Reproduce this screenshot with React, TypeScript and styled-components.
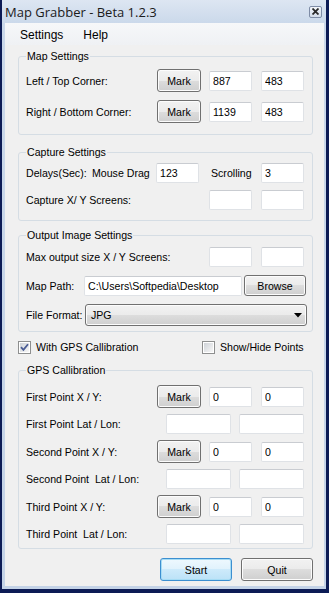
import React from "react";
import styled, { createGlobalStyle } from "styled-components";

const Global = createGlobalStyle`
  html, body { margin: 0; padding: 0; background: #0c1b55; }
  body { width: 329px; height: 593px; overflow: hidden; font-family: "Liberation Sans", Arial, sans-serif; }
  * { box-sizing: border-box; }
`;

const FS = 10.6;

const Screen = styled.div`
  width: 329px;
  height: 593px;
  background: #0c1b55;
  padding: 0 3px 4px 2px;
  display: flex;
`;

const Frame = styled.div`
  flex: 1;
  display: flex;
  flex-direction: column;
  background: linear-gradient(#dde6f2, #cad8ea 24px, #c4d3e7);
  padding: 0 2px 3px 3px;
`;

const TitleBar = styled.div`
  height: 23px;
  display: flex;
  align-items: center;
  justify-content: space-between;
  padding-right: 2px;
`;

const TitleText = styled.span`
  font-family: "Open Sans", "Liberation Sans", Arial, sans-serif;
  font-size: 13px;
  color: #1b1b1b;
  padding-top: 1px;
`;

const CloseBox = styled.div`
  width: 13px;
  height: 12px;
  border: 1px solid #7e8ca6;
  border-radius: 2px;
  background: linear-gradient(#f2f5fa, #d3dcea);
  display: flex;
  align-items: center;
  justify-content: center;
`;

const Client = styled.div`
  flex: 1;
  display: flex;
  flex-direction: column;
  background: #f0f0f0;
`;

const MenuBar = styled.div`
  height: 22px;
  display: flex;
  align-items: center;
  gap: 20px;
  padding: 2px 0 0 15px;
  background: linear-gradient(#f6f7f9, #eff1f4);
`;

const MenuItem = styled.span`
  font-size: 12px;
  color: #000;
`;

const Content = styled.div`
  display: flex;
  flex-direction: column;
  padding: 5px 11px 0 13px;
`;

const Group = styled.fieldset<{ $pt: number; $pb: number; $pr?: number; $mt?: number }>`
  margin: ${(p) => p.$mt ?? 0}px 0 0 0;
  min-width: 0;
  border: 1px solid #d5dde4;
  border-radius: 3px;
  padding: ${(p) => p.$pt}px ${(p) => p.$pr ?? 8}px ${(p) => p.$pb}px 7px;
  display: flex;
  flex-direction: column;
`;

const Legend = styled.legend`
  padding: 0 1px;
  margin: 0;
  font-size: ${FS}px;
  line-height: 13px;
  color: #000;
`;

const Rows = styled.div<{ $gap: number }>`
  display: flex;
  flex-direction: column;
  gap: ${(p) => p.$gap}px;
`;

const Row = styled.div<{ $h: number; $pr?: number; $mr?: number }>`
  height: ${(p) => p.$h}px;
  display: flex;
  align-items: center;
  padding-right: ${(p) => p.$pr ?? 0}px;
  margin-right: ${(p) => p.$mr ?? 0}px;
`;

const GridRow = styled.div`
  height: 20px;
  display: grid;
  grid-template-columns: 66px 64px 43px 62px 43px;
  align-items: center;
`;

const Label = styled.span<{ $w?: number; $pl?: number }>`
  font-size: ${FS}px;
  color: #000;
  white-space: pre;
  ${(p) => (p.$w ? `width: ${p.$w}px; flex: none;` : "flex: 1;")}
  padding-left: ${(p) => p.$pl ?? 0}px;
`;

const Button = styled.button<{ $w: number; $h?: number; $ml?: number; $default?: boolean }>`
  width: ${(p) => p.$w}px;
  height: ${(p) => p.$h ?? 23}px;
  margin-left: ${(p) => p.$ml ?? 0}px;
  flex: none;
  padding: 0;
  font-family: "Liberation Sans", Arial, sans-serif;
  font-size: ${FS}px;
  color: #000;
  border-radius: 3px;
  border: 1px solid ${(p) => (p.$default ? "#3c8fd0" : "#707070")};
  background: ${(p) =>
    p.$default
      ? "linear-gradient(#eef8fe 0%, #e0f2fc 50%, #cdeafb 50%, #bce2f7 100%)"
      : "linear-gradient(#f2f2f2 0%, #ebebeb 50%, #dddddd 50%, #cfcfcf 100%)"};
  box-shadow: inset 0 0 0 1px ${(p) => (p.$default ? "#a6dcf5" : "#fcfcfc")};
`;

const TextBox = styled.input<{ $w: number; $ml?: number }>`
  width: ${(p) => p.$w}px;
  height: 20px;
  margin: 0 0 0 ${(p) => p.$ml ?? 0}px;
  flex: none;
  padding: 0 0 0 3px;
  font-family: "Liberation Sans", Arial, sans-serif;
  font-size: ${FS}px;
  color: #000;
  background: #fff;
  border: 1px solid #dfe2e6;
  border-top-color: #c9ccd1;
  border-radius: 2px;
  outline: none;
`;

const Combo = styled.div`
  width: 222px;
  height: 22px;
  flex: none;
  display: flex;
  align-items: center;
  justify-content: space-between;
  padding: 0 4px 0 5px;
  border: 1px solid #707070;
  border-radius: 3px;
  background: linear-gradient(#f2f2f2 0%, #ebebeb 50%, #dddddd 50%, #cfcfcf 100%);
  box-shadow: inset 0 0 0 1px #fcfcfc;
  font-size: ${FS}px;
  color: #000;
`;

const CheckRow = styled.div`
  height: 16px;
  margin-top: 7px;
  display: grid;
  grid-template-columns: 184px auto;
  align-items: center;
`;

const CheckItem = styled.label`
  display: flex;
  align-items: center;
  gap: 5px;
  font-size: ${FS}px;
  color: #000;
  white-space: nowrap;
`;

const ButtonBar = styled.div`
  margin-top: 9px;
  display: flex;
  justify-content: flex-end;
  gap: 9px;
`;

const CheckBox = ({ checked }: { checked?: boolean }) => (
  <svg width="13" height="13" viewBox="0 0 13 13">
    <defs>
      <linearGradient id={checked ? "cbg1" : "cbg2"} x1="0" y1="0" x2="1" y2="1">
        <stop offset="0" stopColor="#cfd3d8" />
        <stop offset="1" stopColor="#f7f7f7" />
      </linearGradient>
    </defs>
    <rect x="0.5" y="0.5" width="12" height="12" fill="#fff" stroke="#8e8f8f" />
    <rect x="2" y="2" width="9" height="9" fill={`url(#${checked ? "cbg1" : "cbg2"})`} />
    {checked && <path d="M3 6.2 L5.4 8.8 L10 3.2" fill="none" stroke="#4a5c94" strokeWidth="1.8" />}
  </svg>
);

const PointRow = ({ label }: { label: string }) => (
  <Row $h={23}>
    <Label>{label}</Label>
    <Button $w={44}>Mark</Button>
    <TextBox $w={43} $ml={8} defaultValue="0" readOnly />
    <TextBox $w={43} $ml={9} defaultValue="0" readOnly />
  </Row>
);

const LatRow = ({ label }: { label: string }) => (
  <Row $h={20}>
    <Label>{label}</Label>
    <TextBox $w={65} readOnly />
    <TextBox $w={65} $ml={8} readOnly />
  </Row>
);

export default function App() {
  return (
    <>
      <Global />
      <Screen>
        <Frame>
          <TitleBar>
            <TitleText>Map Grabber - Beta 1.2.3</TitleText>
            <CloseBox>
              <svg width="7" height="7" viewBox="0 0 7 7">
                <path d="M0.5 0.5 L6.5 6.5 M6.5 0.5 L0.5 6.5" stroke="#2a2a2a" strokeWidth="1.8" />
              </svg>
            </CloseBox>
          </TitleBar>
          <Client>
            <MenuBar>
              <MenuItem>Settings</MenuItem>
              <MenuItem>Help</MenuItem>
            </MenuBar>
            <Content>
              <Group $pt={6} $pb={11}>
                <Legend>Map Settings</Legend>
                <Rows $gap={8}>
                  <Row $h={23}>
                    <Label>Left / Top Corner:</Label>
                    <Button $w={44}>Mark</Button>
                    <TextBox $w={43} $ml={8} defaultValue="887" readOnly />
                    <TextBox $w={43} $ml={9} defaultValue="483" readOnly />
                  </Row>
                  <Row $h={23}>
                    <Label>Right / Bottom Corner:</Label>
                    <Button $w={44}>Mark</Button>
                    <TextBox $w={43} $ml={8} defaultValue="1139" readOnly />
                    <TextBox $w={43} $ml={9} defaultValue="483" readOnly />
                  </Row>
                </Rows>
              </Group>

              <Group $pt={4} $pb={10} $mt={11}>
                <Legend>Capture Settings</Legend>
                <Rows $gap={7}>
                  <GridRow>
                    <Label>Delays(Sec):</Label>
                    <Label>Mouse Drag</Label>
                    <TextBox $w={43} defaultValue="123" readOnly />
                    <Label $pl={12}>Scrolling</Label>
                    <TextBox $w={43} defaultValue="3" readOnly />
                  </GridRow>
                  <Row $h={20}>
                    <Label>Capture X/ Y Screens:</Label>
                    <TextBox $w={43} readOnly />
                    <TextBox $w={43} $ml={9} readOnly />
                  </Row>
                </Rows>
              </Group>

              <Group $pt={5} $pb={5} $mt={8} $pr={6}>
                <Legend>Output Image Settings</Legend>
                <Rows $gap={8}>
                  <Row $h={20} $pr={2}>
                    <Label>Max output size X / Y Screens:</Label>
                    <TextBox $w={43} readOnly />
                    <TextBox $w={43} $ml={9} readOnly />
                  </Row>
                  <Row $h={21}>
                    <Label $w={58}>Map Path:</Label>
                    <TextBox $w={158} defaultValue="C:\Users\Softpedia\Desktop" readOnly />
                    <Button $w={62} $h={21} $ml={2}>Browse</Button>
                  </Row>
                  <Row $h={22} $mr={-1}>
                    <Label $w={59}>File Format:</Label>
                    <Combo>
                      <span>JPG</span>
                      <svg width="8" height="5" viewBox="0 0 8 5">
                        <path d="M0 0 H8 L4 4.5 Z" fill="#000" />
                      </svg>
                    </Combo>
                  </Row>
                </Rows>
              </Group>

              <CheckRow>
                <CheckItem>
                  <CheckBox checked />
                  With GPS Callibration
                </CheckItem>
                <CheckItem>
                  <CheckBox />
                  Show/Hide Points
                </CheckItem>
              </CheckRow>

              <Group $pt={8} $pb={4} $mt={9}>
                <Legend>GPS Callibration</Legend>
                <Rows $gap={6}>
                  <PointRow label="First Point X / Y:" />
                  <LatRow label="First Point Lat / Lon:" />
                  <PointRow label="Second Point X / Y:" />
                  <LatRow label="Second Point  Lat / Lon:" />
                  <PointRow label="Third Point X / Y:" />
                  <LatRow label="Third Point  Lat / Lon:" />
                </Rows>
              </Group>

              <ButtonBar>
                <Button $w={72} $default>Start</Button>
                <Button $w={72}>Quit</Button>
              </ButtonBar>
            </Content>
          </Client>
        </Frame>
      </Screen>
    </>
  );
}
